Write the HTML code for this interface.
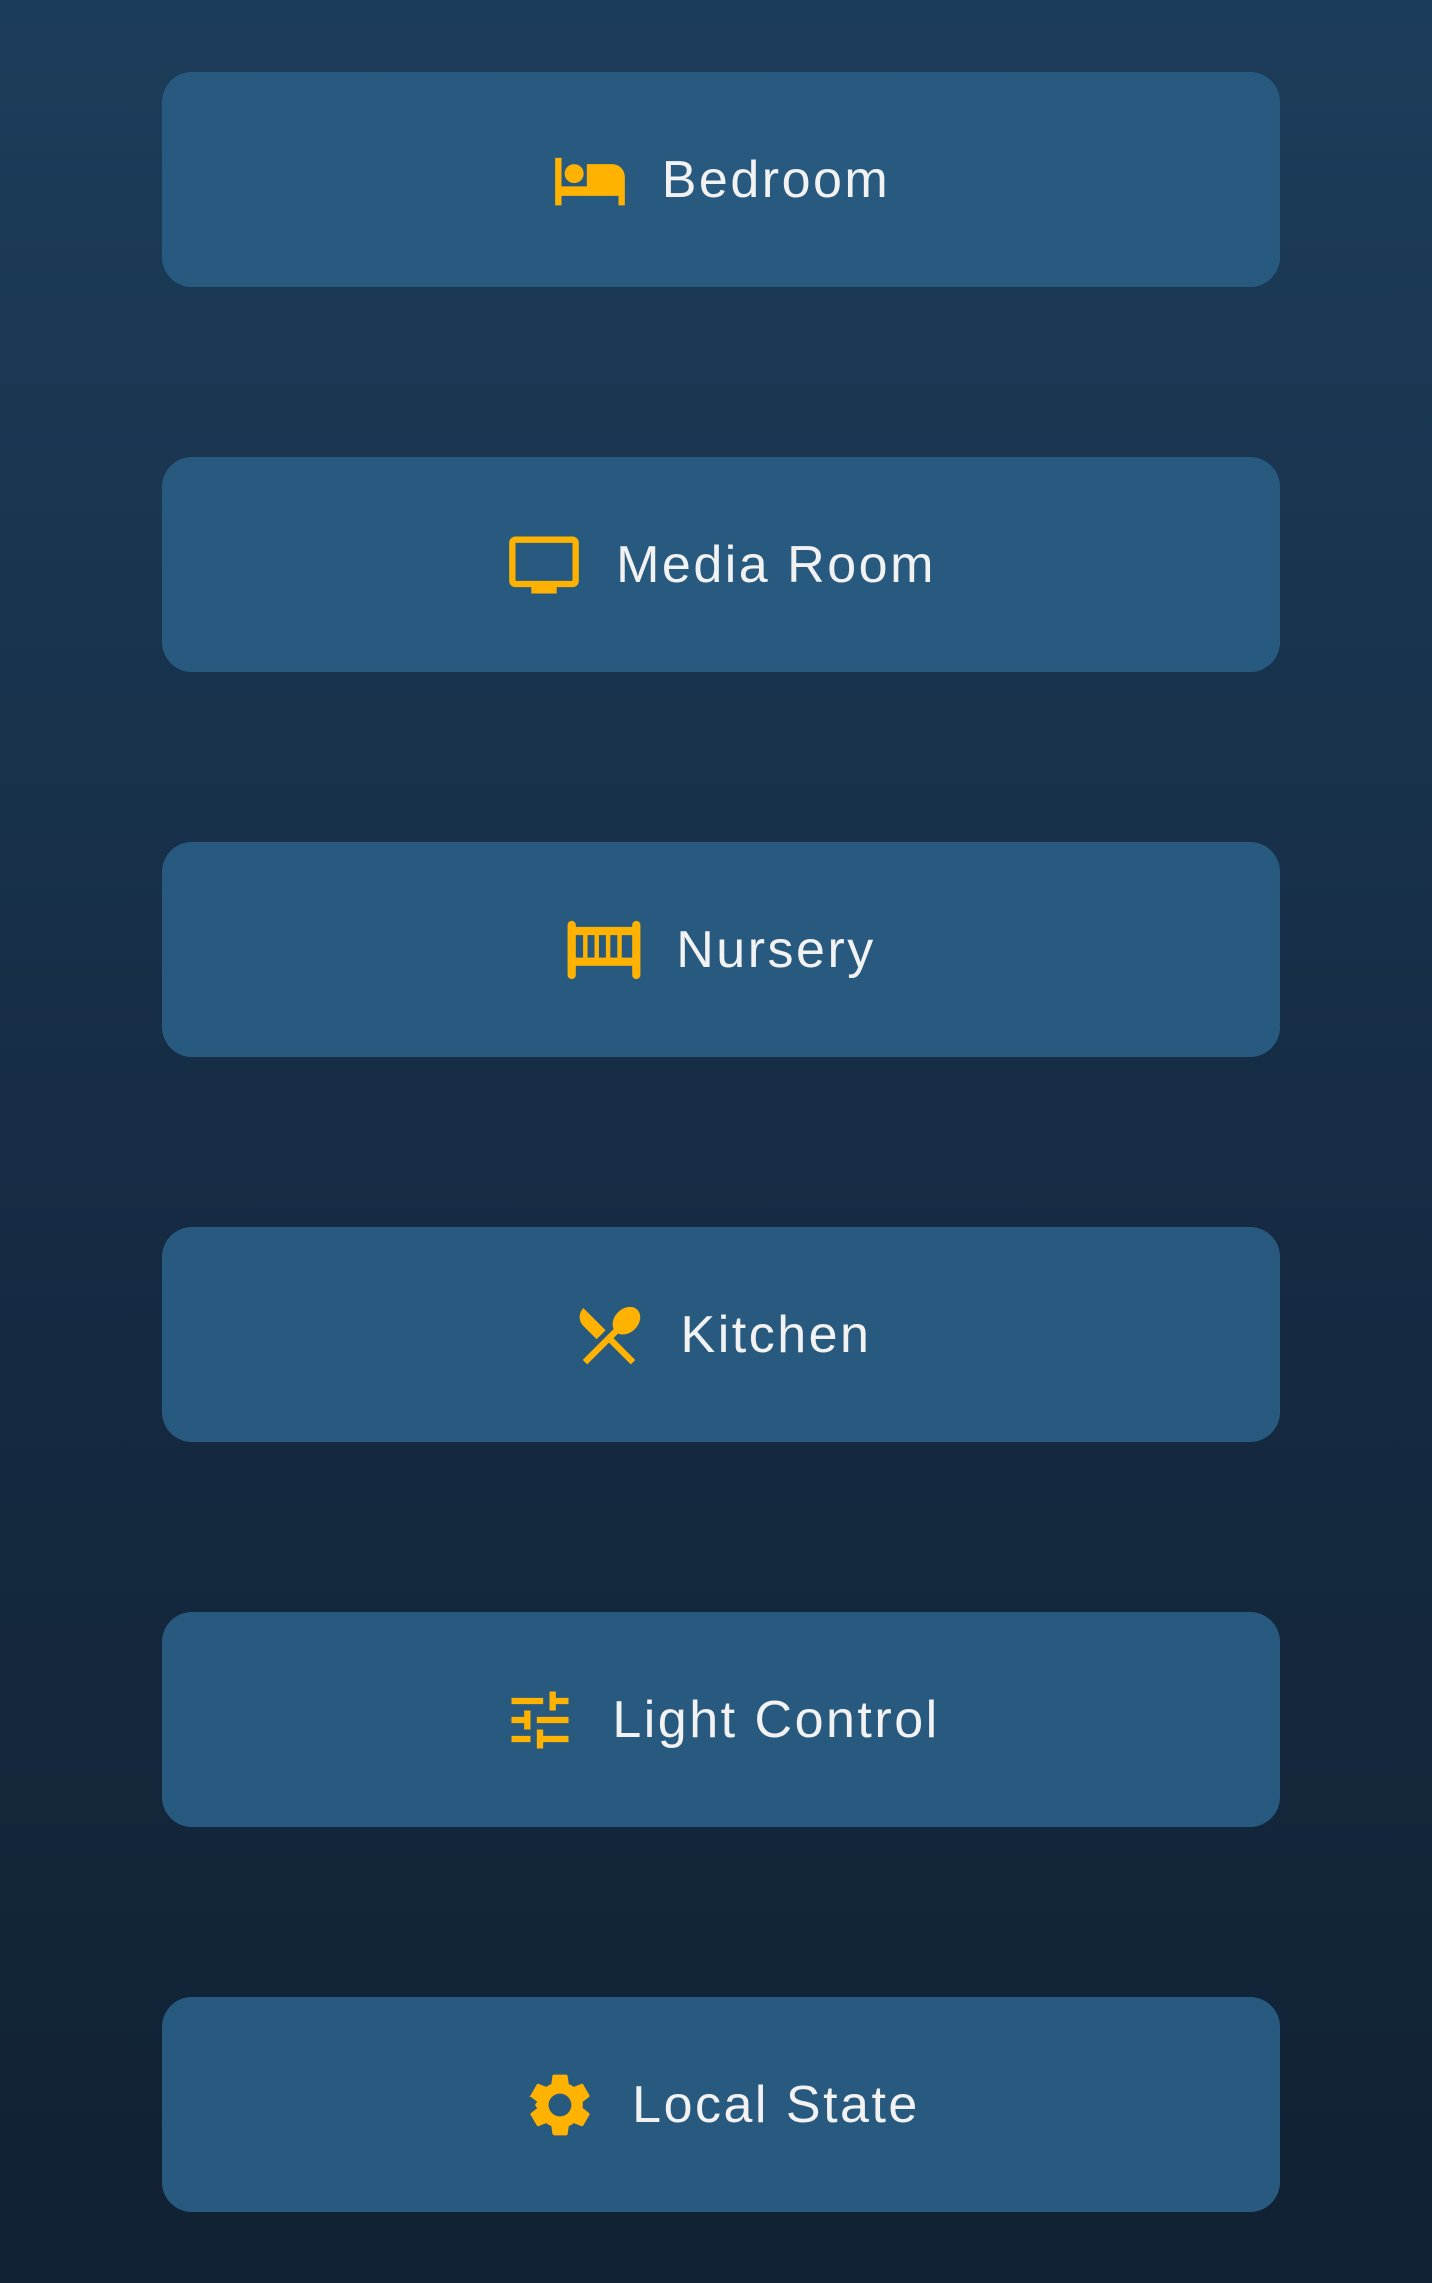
<!DOCTYPE html>
<html><head><style>
html,body{margin:0;padding:0}
body{width:1432px;height:2283px;background:linear-gradient(180deg,#1c3d5a 0%,#162c44 50%,#112133 100%);font-family:"Liberation Sans",sans-serif;position:relative;overflow:hidden}
.b{position:absolute;left:162px;width:1118px;height:215px;border-radius:30px;background:#285a80;display:flex;align-items:center;justify-content:center;color:#f2f2f2;font-size:52px;letter-spacing:2.5px}
.b svg{width:76px;height:76px;margin-right:34px;fill:#ffb300;flex:none}
</style></head><body>
<div class="b" style="top:72px"><svg viewBox="0 0 24 24"><path d="M7 13c1.66 0 3-1.34 3-3S8.66 7 7 7s-3 1.34-3 3 1.34 3 3 3zm12-6h-8v7H3V5H1v15h2v-3h18v3h2v-9c0-2.21-1.790-4-4-4z"/></svg>Bedroom</div>
<div class="b" style="top:457px"><svg viewBox="0 0 24 24"><path d="M21 3H3c-1.1 0-2 .9-2 2v12c0 1.1.9 2 2 2h5v2h8v-2h5c1.1 0 1.99-.9 1.99-2L23 5c0-1.1-.9-2-2-2zm0 14H3V5h18v12z"/></svg>Media Room</div>
<div class="b" style="top:842px"><svg viewBox="0 0 24 24"><rect x="0.5" y="2.8" width="2.6" height="18.4" rx="1.3"/><rect x="20.9" y="2.8" width="2.6" height="18.4" rx="1.3"/><rect x="2" y="4.7" width="20" height="2.6"/><rect x="2" y="14.4" width="20" height="2.6"/><rect x="5.4" y="6" width="1.4" height="9"/><rect x="9" y="6" width="1.4" height="9"/><rect x="12.6" y="6" width="1.4" height="9"/><rect x="16.2" y="6" width="1.4" height="9"/></svg>Nursery</div>
<div class="b" style="top:1227px"><svg viewBox="0 0 24 24"><path d="M8.1 13.34l2.83-2.83L3.91 3.5c-1.56 1.56-1.56 4.09 0 5.66l4.19 4.18zm6.78-1.81c1.53.71 3.68.21 5.270-1.38 1.91-1.910 2.28-4.65.81-6.12-1.46-1.46-4.2-1.1-6.12.81-1.59 1.59-2.09 3.74-1.38 5.27L3.7 19.87l1.41 1.41L12 14.41l6.88 6.88 1.41-1.41L13.41 13l1.47-1.47z"/></svg>Kitchen</div>
<div class="b" style="top:1612px"><svg viewBox="0 0 24 24"><path d="M3 17v2h6v-2H3zM3 5v2h10V5H3zm10 16v-2h8v-2h-8v-2h-2v6h2zM7 9v2H3v2h4v2h2V9H7zm14 4v-2H11v2h10zm-6-4h2V7h4V5h-4V3h-2v6z"/></svg>Light Control</div>
<div class="b" style="top:1997px"><svg viewBox="0 0 24 24"><path d="M19.14 12.94c.04-.3.06-.61.06-.94 0-.32-.02-.64-.07-.94l2.03-1.58c.18-.14.23-.41.12-.61l-1.92-3.32c-.12-.22-.37-.29-.59-.22l-2.39.96c-.5-.38-1.03-.7-1.62-.94l-.36-2.54c-.04-.24-.24-.41-.48-.41h-3.84c-.24 0-.43.17-.47.41l-.36 2.54c-.59.24-1.13.57-1.62.94l-2.39-.96c-.22-.08-.47 0-.59.22L2.74 8.87c-.12.21-.8.47.12.61l2.03 1.58c-.5.3-.7.63-.7.94s.2.64.7.94l-2.030 1.58c-.18.14-.23.41-.12.61l1.92 3.32c.12.22.37.29.59.22l2.39-.96c.5.38 1.03.7 1.62.94l.36 2.54c.5.24.24.41.48.41h3.84c.24 0 .44-.17.47-.41l.36-2.54c.59-.24 1.13-.56 1.62-.94l2.39.96c.22.08.47 0 .59-.22l1.92-3.32c.12-.22.07-.47-.12-.61l-2.01-1.58zM12 15.6c-1.98 0-3.6-1.62-3.6-3.6s1.62-3.6 3.6-3.6 3.6 1.62 3.6 3.6-1.62 3.6-3.6 3.6z"/></svg>Local State</div>
</body></html>
